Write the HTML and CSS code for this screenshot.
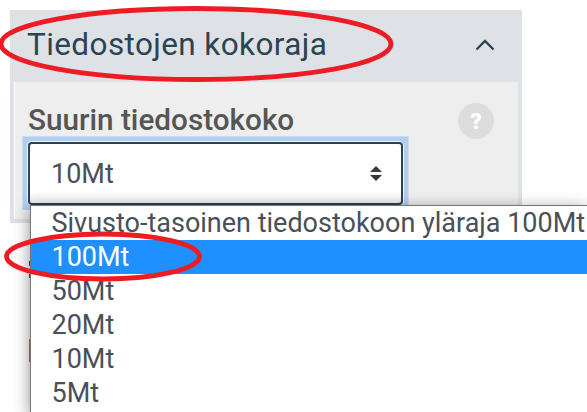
FILE: index.html
```
<!DOCTYPE html>
<html lang="fi">
<head>
  <meta charset="UTF-8" />
  <title>Tiedostojen kokoraja</title>
  <link rel="stylesheet" href="styles.css">
</head>
<body>

  <section class="panel">
    <header class="panel-header">
      <h2>Tiedostojen kokoraja</h2>
      <svg class="chevron" width="20" height="12" viewBox="0 0 20 12">
        <path d="M1.5 10.5 L10 2 L18.5 10.5" />
      </svg>
    </header>
    <div class="panel-body">
      <div class="label-row">
        <label>Suurin tiedostokoko</label>
        <span class="help">?</span>
      </div>
      <div class="focus-ring">
        <div class="select">
          <span>10Mt</span>
          <svg class="arrows" width="12" height="15" viewBox="0 0 12 15">
            <path d="M0 6 L6 0 L12 6 Z M0 9 L6 15 L12 9 Z" />
          </svg>
        </div>
      </div>
    </div>
  </section>

  <div class="behind behind-top"></div>
  <div class="behind behind-mid"></div>
  <div class="behind behind-low"></div>

  <ul class="options">
    <li>Sivusto-tasoinen tiedostokoon yläraja 100Mt</li>
    <li class="active">100Mt</li>
    <li>50Mt</li>
    <li>20Mt</li>
    <li>10Mt</li>
    <li>5Mt</li>
  </ul>

  <svg class="marks" width="587" height="412" viewBox="0 0 587 412">
    <ellipse cx="196" cy="44" rx="195" ry="35.5" />
    <ellipse cx="103" cy="256.500" rx="96.500" ry="22.500" />
  </svg>

</body>
</html>
```

FILE: styles.css
```
* {
  box-sizing: border-box;
}

body {
  margin: 0;
  height: 412px;
  padding: 10px;
  position: relative;
  overflow: hidden;
  background: #fff;
  color: #495057;
  font-family: Roboto, sans-serif;
  font-size: 27px;
}

.panel {
  width: 512px;
  height: 213px;
  border: 4px solid #dee2e6;
  border-top: none;
  background: #eee;
}

.panel-header {
  display: flex;
  align-items: center;
  justify-content: space-between;
  height: 72px;
  margin: 0 -4px;
  padding: 0 27px 3px 17px;
  background: #dee2e6;
  color: #2b4450;
}

.panel-header h2 {
  margin: 0;
  font-size: 31.5px;
  font-weight: 400;
  letter-spacing: 0.4px;
}

.chevron {
  fill: none;
  stroke: #2b4450;
  stroke-width: 2.3;
}

.panel-body {
  height: 137px;
  padding: 20px 24px 0 7px;
  border-left: 1px solid #fff;
}

.label-row {
  display: flex;
  align-items: center;
  justify-content: space-between;
  height: 34px;
  padding-left: 6px;
}

.label-row label {
  padding-top: 1px;
  color: #555;
  font-size: 29.7px;
  font-weight: 500;
}

.help {
  width: 36px;
  height: 36px;
  margin-top: 4px;
  border-radius: 50%;
  background: #ddd;
  color: #fff;
  font-size: 22px;
  font-weight: 900;
  line-height: 37px;
  text-align: center;
}

.focus-ring {
  width: 387px;
  padding: 5px;
  border: 1px solid #cbdcf0;
  border-bottom: none;
  background: #b1cff1;
}

.select {
  display: flex;
  align-items: center;
  justify-content: space-between;
  height: 63px;
  padding: 0 19px 0 21px;
  border: 2px solid #2b4450;
  border-radius: 4px;
  background: linear-gradient(#fff 80%, #efefef);
  box-shadow: 0 0 0 1px #eef5fc;
}

.arrows {
  fill: #343a40;
}

.options {
  position: absolute;
  left: 30px;
  right: 0;
  top: 205px;
  bottom: 0;
  margin: 0;
  padding: 0;
  list-style: none;
  border: 1px solid #767676;
  border-width: 1px 0 0 1px;
  background: #fff;
  box-shadow: 0 4px 15px rgba(0, 0, 0, 0.45);
}

.options li {
  height: 34px;
  padding-left: 20.5px;
  line-height: 34px;
  white-space: nowrap;
}

.options .active {
  background: #1e90ff;
  color: #fff;
}

/* edges of the content the menu covers */
.behind {
  position: absolute;
  left: 29px;
  width: 2px;
  background: #5b4a3c;
}

.behind-top {
  top: 261px;
  height: 5px;
}

.behind-mid {
  top: 274px;
  height: 4px;
}

.behind-low {
  top: 339px;
  height: 23px;
  background: #a07860;
}

.marks {
  position: absolute;
  left: 0;
  top: 0;
  fill: none;
  stroke: #ed1c24;
  stroke-width: 4.8;
}
```
